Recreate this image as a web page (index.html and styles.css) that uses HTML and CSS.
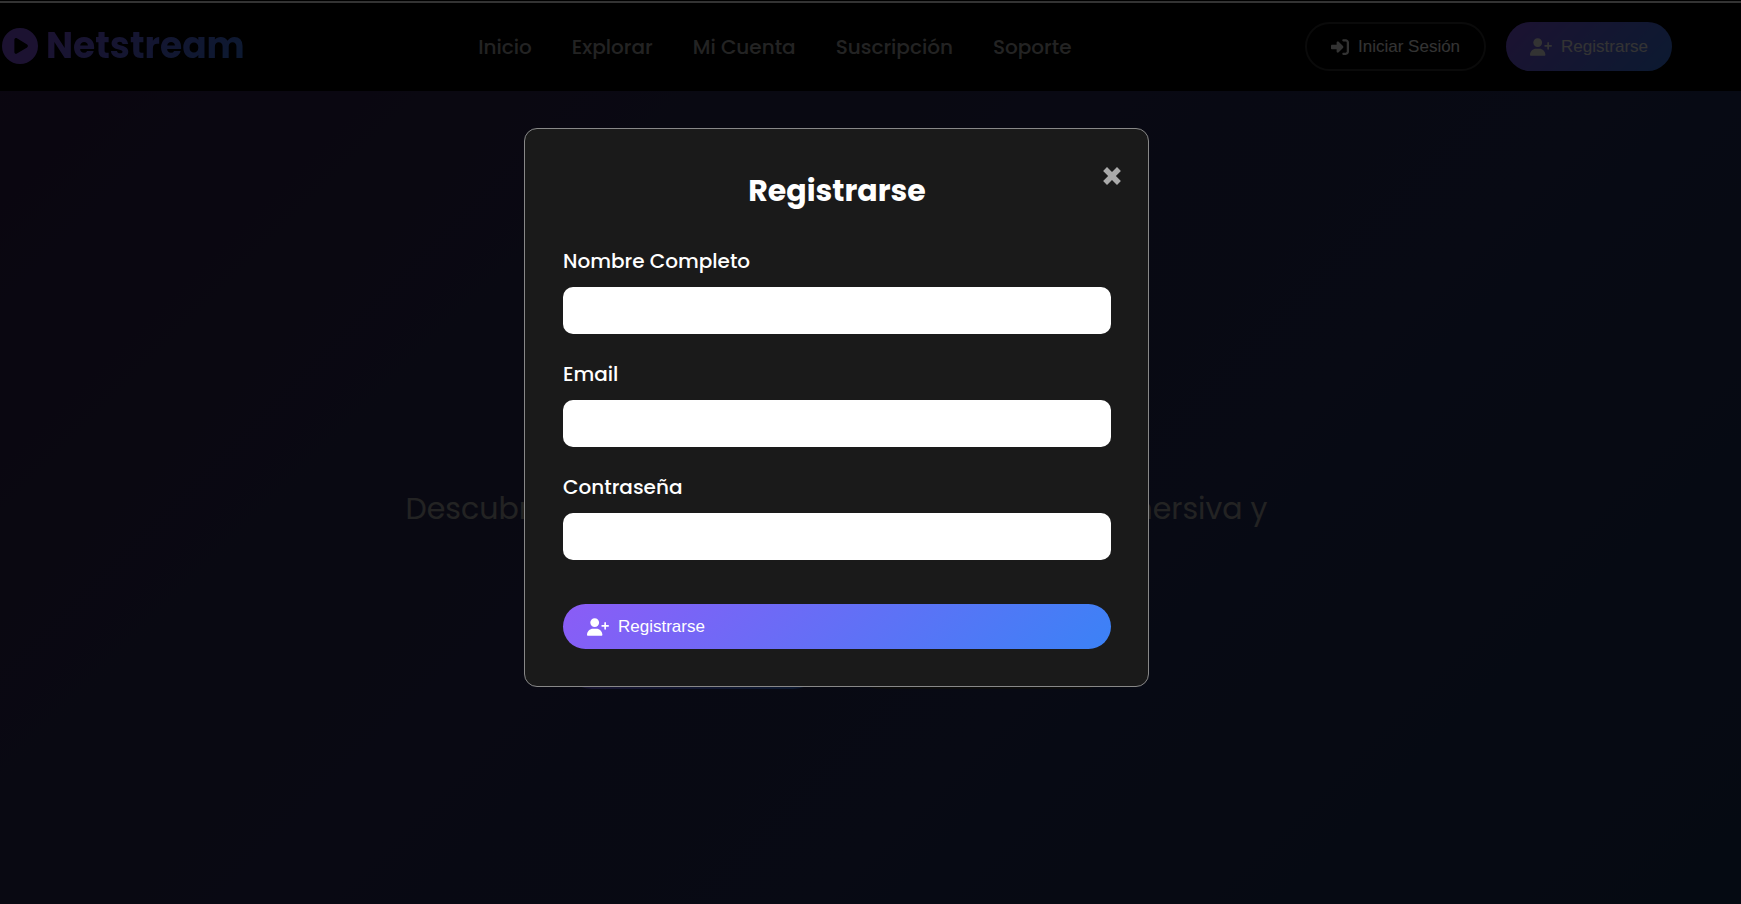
FILE: index.html
```html
<!DOCTYPE html>
<html lang="es">
<head>
<meta charset="utf-8">
<meta name="viewport" content="width=device-width, initial-scale=1">
<title>Netstream</title>
<link rel="stylesheet" href="styles.css">
</head>
<body>
<svg class="sprite" aria-hidden="true">
  <symbol id="user-plus" viewBox="0 0 640 512"><path d="M96 128a128 128 0 1 1 256 0A128 128 0 1 1 96 128zM0 482.300C0 383.800 79.800 304 178.300 304h91.400C368.200 304 448 383.800 448 482.300c0 16.400-13.300 29.700-29.700 29.700H29.700C13.300 512 0 498.700 0 482.300zM504 312V248H440c-13.300 0-24-10.700-24-24s10.700-24 24-24h64V136c0-13.300 10.700-24 24-24s24 10.700 24 24v64h64c13.300 0 24 10.700 24 24s-10.700 24-24 24H552v64c0 13.300-10.700 24-24 24s-24-10.700-24-24z"/></symbol>
  <symbol id="login" viewBox="0 0 512 512"><path d="M217.900 105.900L340.700 228.700c7.200 7.200 11.300 17.100 11.300 27.300s-4.100 20.100-11.300 27.300L217.900 406.100c-6.400 6.400-15 9.900-24 9.900c-18.700 0-33.900-15.200-33.900-33.900V320H32c-17.700 0-32-14.300-32-32V224c0-17.700 14.300-32 32-32H160V129.900c0-18.700 15.200-33.900 33.900-33.900c9 0 17.600 3.600 24 9.900zM352 416h64c17.700 0 32-14.300 32-32V128c0-17.700-14.300-32-32-32H352c-17.700 0-32-14.300-32-32s14.300-32 32-32h64c53 0 96 43 96 96V384c0 53-43 96-96 96H352c-17.700 0-32-14.300-32-32s14.300-32 32-32z"/></symbol>
  <symbol id="close" viewBox="0 0 18 18"><path d="M4.500 1 9 5.500 13.500 1 17 4.500 12.500 9 17 13.500 13.500 17 9 12.500 4.500 17 1 13.500 5.500 9 1 4.500z"/></symbol>
</svg>

<header class="header">
  <a class="logo" href="#">
    <svg class="logo-icon" viewBox="0 0 512 512" aria-hidden="true"><path d="M0 256a256 256 0 1 1 512 0A256 256 0 1 1 0 256zM188.300 147.100c-7.600 4.200-12.300 12.300-12.300 20.900V344c0 8.700 4.700 16.700 12.300 20.900s16.800 4.100 24.300-.5l144-88c7.100-4.400 11.500-12.100 11.500-20.500s-4.400-16.100-11.500-20.500l-144-88c-7.400-4.500-16.700-4.700-24.300-.5z"/></svg>
    <span class="logo-text">Netstream</span>
  </a>
  <nav class="nav">
    <a href="#">Inicio</a>
    <a href="#">Explorar</a>
    <a href="#">Mi Cuenta</a>
    <a href="#">Suscripción</a>
    <a href="#">Soporte</a>
  </nav>
  <div class="actions">
    <button class="btn btn-outline" type="button"><svg class="icon-login" aria-hidden="true"><use href="#login"/></svg>Iniciar Sesión</button>
    <button class="btn btn-primary" type="button"><svg class="icon-user" aria-hidden="true"><use href="#user-plus"/></svg>Registrarse</button>
  </div>
</header>

<main class="hero">
  <p class="tagline"><span>Descubre</span> <span>inmersiva y</span></p>
  <div class="hero-actions">
    <button class="cta cta-primary" type="button" aria-label="Registrarse"></button>
    <button class="cta cta-outline" type="button" aria-label="Explorar"></button>
  </div>
</main>

<div class="overlay">
  <section class="modal" role="dialog" aria-modal="true" aria-labelledby="modal-title">
    <button class="close" type="button" aria-label="Cerrar"><svg aria-hidden="true"><use href="#close"/></svg></button>
    <h2 class="modal-title" id="modal-title">Registrarse</h2>
    <form class="form">
      <div class="field">
        <label for="name">Nombre Completo</label>
        <input id="name" type="text">
      </div>
      <div class="field">
        <label for="email">Email</label>
        <input id="email" type="email">
      </div>
      <div class="field">
        <label for="password">Contraseña</label>
        <input id="password" type="password">
      </div>
      <button class="btn btn-primary btn-submit" type="submit"><svg class="icon-user" aria-hidden="true"><use href="#user-plus"/></svg>Registrarse</button>
    </form>
  </section>
</div>
</body>
</html>
```
FILE: styles.css
```css
* {
  box-sizing: border-box;
}

body {
  margin: 0;
  min-height: 100vh;
  background: linear-gradient(135deg, #371e50 0%, #30305c 35%, #283264 65%, #1c325c 100%);
  color: #fff;
  font-family: Poppins, Inter, sans-serif;
  font-size: 20px;
}

.sprite {
  display: none;
}

svg {
  flex: none;
  fill: currentColor;
}

.header {
  display: flex;
  align-items: center;
  justify-content: space-between;
  height: 91px;
  padding: 2px 69px 0 2px;
  background: #000;
}

.logo {
  display: flex;
  align-items: center;
  gap: 8px;
  padding-bottom: 1px;
  color: #8b5cf6;
  text-decoration: none;
}

.logo-icon {
  width: 36px;
  height: 36px;
}

.logo-text {
  font-size: 36px;
  font-weight: 700;
  line-height: 54px;
  background: linear-gradient(135deg, #8b5cf6, #3b82f6);
  -webkit-background-clip: text;
  background-clip: text;
  color: transparent;
}

.nav {
  display: flex;
  gap: 40px;
}

.nav a {
  color: #b0b0b0;
  font-weight: 500;
  text-decoration: none;
}

.actions {
  display: flex;
  gap: 20px;
}

.btn {
  display: flex;
  align-items: center;
  gap: 9px;
  height: 49px;
  padding: 0 24px;
  border: 0;
  border-radius: 25px;
  color: #fff;
  font-family: "Liberation Sans", Arial, sans-serif;
  font-size: 17px;
}

.btn-outline {
  border: 2px solid #333;
  background: transparent;
}

.btn-primary {
  background: linear-gradient(135deg, #8b5cf6, #3b82f6);
}

.icon-user {
  width: 22px;
  height: 18px;
}

.icon-login {
  width: 18px;
  height: 18px;
}

.hero {
  display: flex;
  flex-direction: column;
  align-items: center;
  padding: 394px 68px 0 0;
}

.tagline {
  display: flex;
  justify-content: space-between;
  width: 100%;
  max-width: 862px;
  margin: 0 0 92px;
  color: #b0b0b0;
  font-size: 30px;
  font-weight: 400;
  line-height: 48px;
}

.hero-actions {
  display: flex;
  gap: 24px;
}

.cta {
  width: 265px;
  height: 64px;
  border: 0;
  border-radius: 32px;
}

.cta-primary {
  background: linear-gradient(135deg, #8b5cf6, #3b82f6);
}

.cta-outline {
  border: 2px solid #444;
  background: transparent;
}

.overlay {
  position: fixed;
  inset: 0;
  padding: 128px 68px 0 0;
  background: linear-gradient(transparent 1px, #333 1px 3px, transparent 3px), rgba(0, 0, 0, 0.8);
}

.modal {
  position: relative;
  width: 625px;
  max-width: 90%;
  margin: 0 auto;
  padding: 38px 37px 37px 38px;
  border: 1px solid #888;
  border-radius: 13px;
  background: #1a1a1a;
}

.close {
  position: absolute;
  top: 37px;
  right: 26px;
  width: 20px;
  height: 20px;
  padding: 0;
  border: 0;
  background: none;
  color: #aaa;
}

.close svg {
  display: block;
  width: 20px;
  height: 20px;
}

.modal-title {
  margin: 0 0 32px;
  font-size: 30px;
  font-weight: 700;
  line-height: 48px;
  text-align: center;
}

.form {
  display: flex;
  flex-direction: column;
  gap: 26px;
}

.field {
  display: flex;
  flex-direction: column;
  gap: 12px;
}

.field label {
  font-weight: 500;
  line-height: 28px;
}

.field input {
  width: 100%;
  height: 47px;
  padding: 0 12px;
  border: 0;
  border-radius: 10px;
  background: #fff;
  font-size: 17px;
}

.btn-submit {
  height: 45px;
  margin-top: 18px;
}
```
